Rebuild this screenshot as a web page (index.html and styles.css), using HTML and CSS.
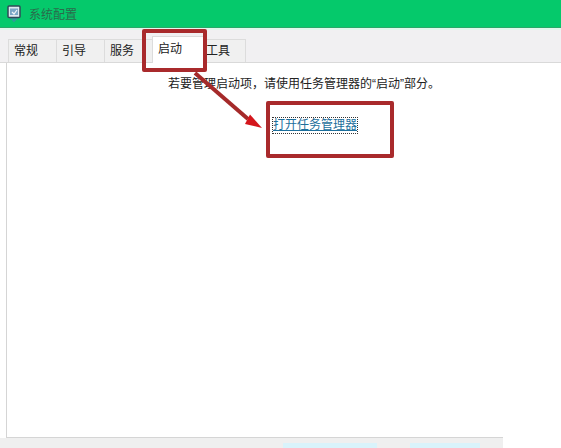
FILE: index.html
```html
<!DOCTYPE html>
<html lang="zh">
<head>
    <meta charset="UTF-8">
    <title>系统配置</title>
    <link rel="stylesheet" href="styles.css">
</head>
<body>
    <div class="titlebar">
        <svg class="app-icon" width="14" height="18" viewBox="0 0 14 18">
            <path d="M3 13l4 4.500 4-4.500z" fill="#2f9d96"/>
            <rect x="1" y="1" width="12" height="11.500" rx="1" fill="#dfeaf0" stroke="#2f4a58" stroke-width="1.500"/>
            <path d="M3 3.500h8v6.500H3z" fill="#7ba7c6"/>
            <path d="M5 7l2 2 3-4" fill="none" stroke="#f2f6f8" stroke-width="1.200"/>
        </svg>
        <span class="title">系统配置</span>
    </div>
    <div class="tabbar">
        <div class="tab">常规</div>
        <div class="tab">引导</div>
        <div class="tab">服务</div>
        <div class="tab active">启动</div>
        <div class="tab last">工具</div>
    </div>
    <div class="panel">
        <p class="hint">若要管理启动项，请使用任务管理器的“启动”部分。</p>
        <a class="link" href="#">打开任务管理器</a>
    </div>
    <div class="footer">
        <div class="btn-glow"></div>
        <div class="btn-glow"></div>
    </div>

    <!-- red annotations on top of the screenshot -->
    <div class="mark mark-tab"></div>
    <div class="mark mark-link"></div>
    <svg class="arrow" width="80" height="64" viewBox="0 0 80 64">
        <path d="M5 3L58 49" stroke="#a52a2a" stroke-width="4" fill="none"/>
        <path d="M72 58L60 44.500 55 54z" fill="#d4161c"/>
    </svg>
</body>
</html>
```

FILE: styles.css
```css
body {
    margin: 0;
    width: 561px;
    height: 448px;
    overflow: hidden;
    position: relative;
    background: #fff;
    color: #222;
    font-family: "Liberation Sans", "Noto Sans CJK SC", sans-serif;
    font-size: 12px;
}
.titlebar {
    height: 27px;
    background: #05c96b;
    border-bottom: 1px solid #2aa868;
    display: flex;
    align-items: center;
    padding-left: 7px;
    gap: 8px;
}
.title {
    font-size: 12px;
    color: #2a6b4b;
}
.tabbar {
    height: 32px;
    padding-left: 8px;
    display: flex;
    align-items: flex-end;
    background: #f1f0f2;
    border-top: 2px solid #e2f7ec;
    border-bottom: 1px solid #d9d9d9;
}
.tab {
    width: 47px;
    height: 22px;
    line-height: 23px;
    text-indent: 5px;
    background: #f0f0f0;
    border: 1px solid #dcdcdc;
    border-bottom: none;
    color: #222;
}
.tab.active {
    height: 26px;
    line-height: 24px;
    background: #fff;
    margin-bottom: -1px;
    width: 52px;
    position: relative;
    margin-right: -1px;
}
.tab.last {
    width: 40px;
    text-indent: 1px;
}
.tab + .tab {
    margin-left: -1px;
}
.panel {
    height: 375px;
    margin-left: 6px;
    border-left: 1px solid #d5d5d5;
    border-bottom: 1px solid #d5d5d5;
    box-sizing: border-box;
    width: 497px;
    padding: 12px 0 0 161px;
    white-space: nowrap;
}
.hint {
    margin: 0;
    line-height: 18px;
}
.link {
    display: inline-block;
    margin: 25px 0 0 105px;
    color: #1d6f9c;
    line-height: 15px;
    outline: 1px dotted #333;
}
.footer {
    height: 10px;
    width: 503px;
    background: #efefef;
    display: flex;
    align-items: flex-end;
    gap: 33px;
    padding-left: 283px;
    box-sizing: border-box;
}
.btn-glow {
    width: 94px;
    height: 5px;
    background: #d9f3fb;
}
.btn-glow + .btn-glow {
    width: 70px;
}
.mark {
    position: absolute;
    border: 4px solid #a92a2c;
    border-radius: 2px;
    box-sizing: border-box;
}
.mark-tab {
    left: 142px;
    top: 29px;
    width: 65px;
    height: 43px;
}
.mark-link {
    left: 266px;
    top: 101px;
    width: 128px;
    height: 57px;
}
.arrow {
    position: absolute;
    left: 190px;
    top: 70px;
}
.app-icon {
    flex: none;
}
```
